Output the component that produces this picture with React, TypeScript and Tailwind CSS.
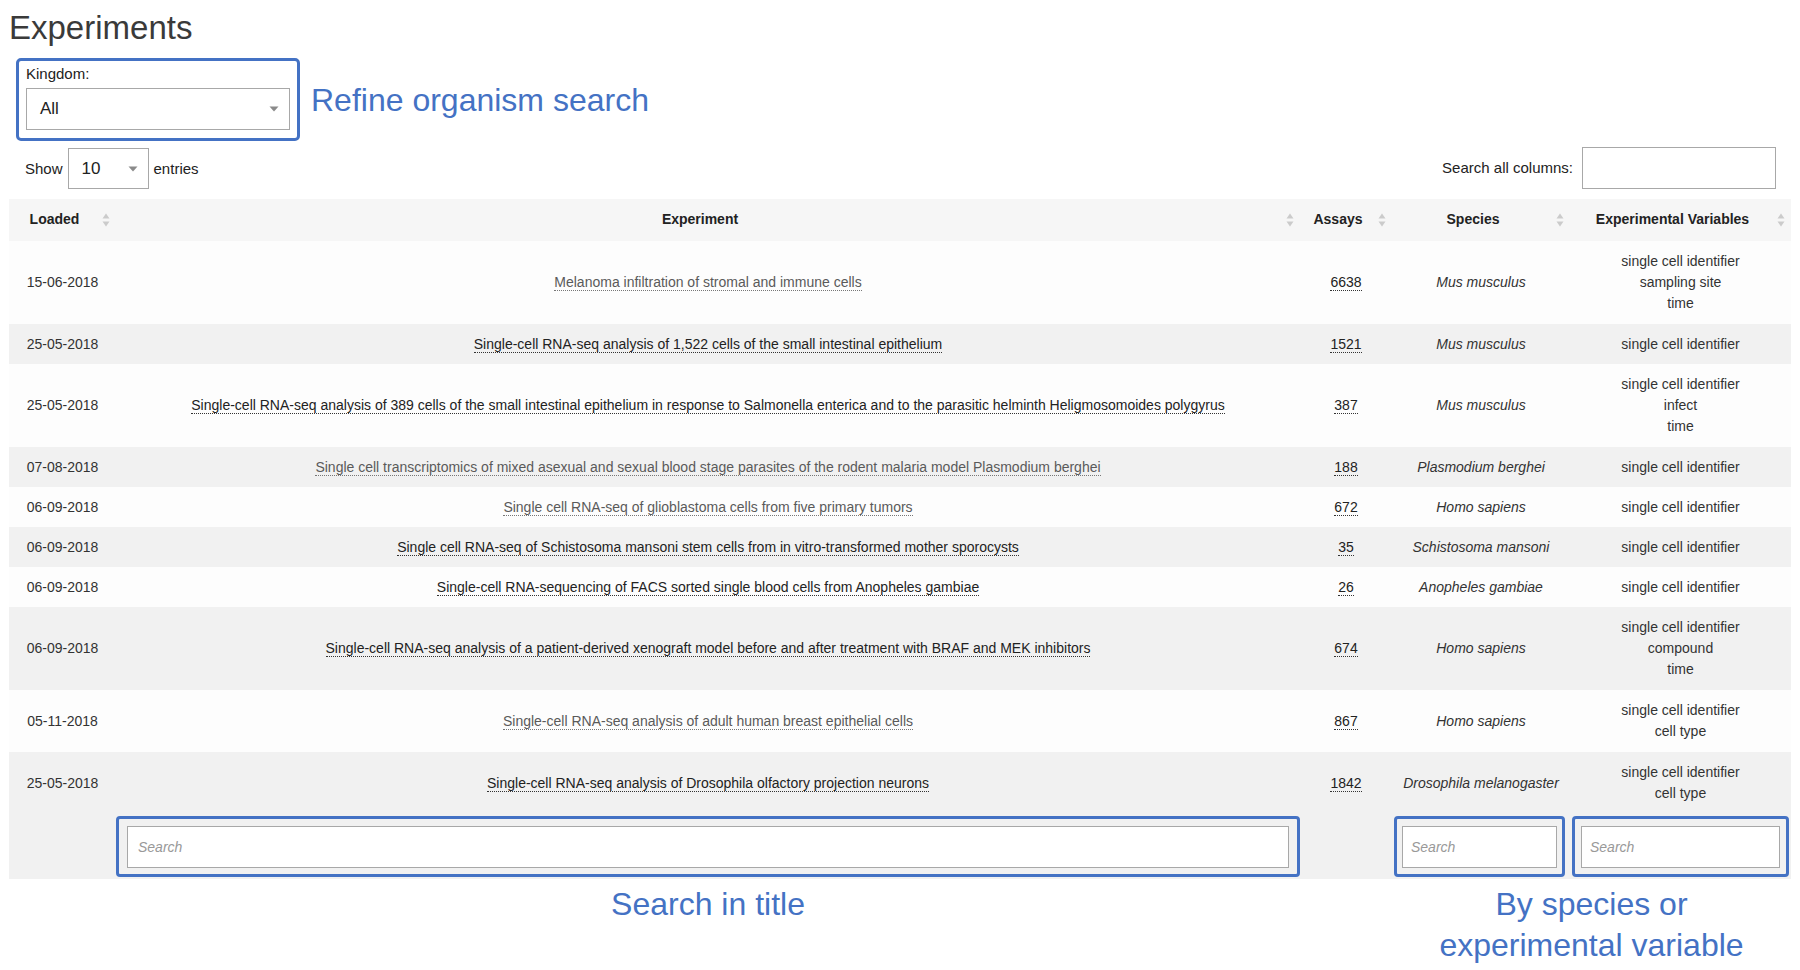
import React from "react";

type Row = {
  date: string;
  title: string;
  grey?: boolean;
  assays: string;
  species: string;
  vars: string[];
};

const rows: Row[] = [
  { date: "15-06-2018", title: "Melanoma infiltration of stromal and immune cells", grey: true, assays: "6638", species: "Mus musculus", vars: ["single cell identifier", "sampling site", "time"] },
  { date: "25-05-2018", title: "Single-cell RNA-seq analysis of 1,522 cells of the small intestinal epithelium", assays: "1521", species: "Mus musculus", vars: ["single cell identifier"] },
  { date: "25-05-2018", title: "Single-cell RNA-seq analysis of 389 cells of the small intestinal epithelium in response to Salmonella enterica and to the parasitic helminth Heligmosomoides polygyrus", assays: "387", species: "Mus musculus", vars: ["single cell identifier", "infect", "time"] },
  { date: "07-08-2018", title: "Single cell transcriptomics of mixed asexual and sexual blood stage parasites of the rodent malaria model Plasmodium berghei", grey: true, assays: "188", species: "Plasmodium berghei", vars: ["single cell identifier"] },
  { date: "06-09-2018", title: "Single cell RNA-seq of glioblastoma cells from five primary tumors", grey: true, assays: "672", species: "Homo sapiens", vars: ["single cell identifier"] },
  { date: "06-09-2018", title: "Single cell RNA-seq of Schistosoma mansoni stem cells from in vitro-transformed mother sporocysts", assays: "35", species: "Schistosoma mansoni", vars: ["single cell identifier"] },
  { date: "06-09-2018", title: "Single-cell RNA-sequencing of FACS sorted single blood cells from Anopheles gambiae", assays: "26", species: "Anopheles gambiae", vars: ["single cell identifier"] },
  { date: "06-09-2018", title: "Single-cell RNA-seq analysis of a patient-derived xenograft model before and after treatment with BRAF and MEK inhibitors", assays: "674", species: "Homo sapiens", vars: ["single cell identifier", "compound", "time"] },
  { date: "05-11-2018", title: "Single-cell RNA-seq analysis of adult human breast epithelial cells", grey: true, assays: "867", species: "Homo sapiens", vars: ["single cell identifier", "cell type"] },
  { date: "25-05-2018", title: "Single-cell RNA-seq analysis of Drosophila olfactory projection neurons", assays: "1842", species: "Drosophila melanogaster", vars: ["single cell identifier", "cell type"] },
];

const SortIcon = () => (
  <svg width="8" height="16" viewBox="0 0 8 16" className="absolute right-[6px] top-1/2 -translate-y-1/2">
    <path d="M4 1.5 L7.5 6.5 H0.5 Z" fill="#cbcbcb" />
    <path d="M4 14.5 L7.5 9.5 H0.5 Z" fill="#cbcbcb" />
  </svg>
);

const Caret = () => (
  <svg width="10" height="6" viewBox="0 0 10 6">
    <path d="M0.5 0.5 H9.5 L5 5.5 Z" fill="#8a8a8a" />
  </svg>
);

const rowHeight = (n: number) => (n === 3 ? "h-[83px]" : n === 2 ? "h-[62px]" : "h-[40px]");

export default function App() {
  return (
    <div className="min-h-screen bg-white font-['Liberation_Sans',Arial,sans-serif] text-[#333]">
      <div className="px-[9px]">
        <h1 className="mt-[11px] text-[33px] leading-[33px] text-[#3a3a3a] font-normal">Experiments</h1>

        <div className="mt-[14px] ml-[7px] flex items-center gap-[11px]">
          <div className="w-[284px] rounded-[5px] border-[3px] border-[#4472c4] px-[7px] pt-[4px] pb-[8px]">
            <div className="text-[15px] leading-[18px] text-[#222]">Kingdom:</div>
            <div className="mt-[5px] flex h-[42px] items-center justify-between border-[1.5px] border-[#a8a8a8] bg-white pl-[13px] pr-[10px]">
              <span className="text-[17px] text-[#222]">All</span>
              <Caret />
            </div>
          </div>
          <div className="text-[32px] leading-[40px] text-[#4472c4]">Refine organism search</div>
        </div>

        <div className="mt-[6px] flex h-[42px] items-center justify-between pl-[16px] pr-[15px]">
          <div className="flex items-center text-[15px] text-[#222]">
            <span className="pt-[3px]">Show</span>
            <div className="mx-[5px] mt-[1px] flex h-[41px] w-[81px] items-center justify-between border-[1.5px] border-[#a8a8a8] bg-white pl-[13px] pr-[10px]">
              <span className="pt-[1px] text-[17px] text-[#222]">10</span>
              <Caret />
            </div>
            <span className="pt-[3px]">entries</span>
          </div>
          <div className="flex items-center text-[15px] text-[#222]">
            <span className="mr-[9px] pt-[1px]">Search all columns:</span>
            <input className="h-[42px] w-[194px] border border-[#a8a8a8] bg-white px-2 outline-none" />
          </div>
        </div>

        <table className="mt-[10px] w-[1782px] table-fixed text-[14px] leading-[21px]">
          <colgroup>
            <col className="w-[107px]" />
            <col className="w-[1184px]" />
            <col className="w-[92px]" />
            <col className="w-[178px]" />
            <col className="w-[221px]" />
          </colgroup>
          <thead>
            <tr className="h-[42px] bg-[#f6f6f6]">
              {["Loaded", "Experiment", "Assays", "Species", "Experimental Variables"].map((h) => (
                <th key={h} className="relative pl-[10px] pr-[26px] pb-[1px] text-center align-middle font-bold text-[#222]">
                  {h}
                  <SortIcon />
                </th>
              ))}
            </tr>
          </thead>
          <tbody>
            {rows.map((r, i) => (
              <tr key={i} className={`${rowHeight(r.vars.length)} ${i % 2 === 0 ? "bg-[#fdfdfd]" : "bg-[#f1f1f1]"}`}>
                <td className="px-[8px] text-center align-middle text-[#333]">{r.date}</td>
                <td className="px-[8px] text-center align-middle">
                  <span className={`border-b border-dotted ${r.grey ? "border-[#777] text-[#5a5a5a]" : "border-[#333] text-[#222]"}`}>{r.title}</span>
                </td>
                <td className="px-[8px] text-center align-middle">
                  <span className="border-b border-dotted border-[#333] text-[#222]">{r.assays}</span>
                </td>
                <td className="px-[8px] text-center align-middle italic text-[#333]">{r.species}</td>
                <td className="px-[8px] text-center align-middle text-[#333]">
                  {r.vars.map((v) => (
                    <div key={v}>{v}</div>
                  ))}
                </td>
              </tr>
            ))}
            <tr className="h-[65px] bg-[#f1f1f1]">
              <td />
              <td className="py-[2px] align-middle">
                <div className="rounded-[4px] border-[3px] border-[#4472c4] px-[8px] pt-[7px] pb-[6px]">
                  <input placeholder="Search" className="h-[42px] w-full border-[1.5px] border-[#a8a8a8] bg-white px-[10px] text-[14px] outline-none placeholder:italic placeholder:text-[#999]" />
                </div>
              </td>
              <td />
              <td className="py-[2px] pl-[2px] pr-[5px] align-middle">
                <div className="rounded-[4px] border-[3px] border-[#4472c4] px-[5px] pt-[7px] pb-[6px]">
                  <input placeholder="Search" className="h-[42px] w-full border-[1.5px] border-[#a8a8a8] bg-white px-[8px] text-[14px] outline-none placeholder:italic placeholder:text-[#999]" />
                </div>
              </td>
              <td className="px-[2px] py-[2px] align-middle">
                <div className="rounded-[4px] border-[3px] border-[#4472c4] px-[6px] pt-[7px] pb-[6px]">
                  <input placeholder="Search" className="h-[42px] w-full border-[1.5px] border-[#a8a8a8] bg-white px-[8px] text-[14px] outline-none placeholder:italic placeholder:text-[#999]" />
                </div>
              </td>
            </tr>
          </tbody>
        </table>

        <div className="mt-[5px] flex text-[32px] leading-[41px] text-[#4472c4]">
          <div className="w-[107px]" />
          <div className="w-[1184px] text-center">Search in title</div>
          <div className="w-[92px]" />
          <div className="w-[399px] text-center">
            <div>By species or</div>
            <div>experimental variable</div>
          </div>
        </div>
      </div>
    </div>
  );
}
